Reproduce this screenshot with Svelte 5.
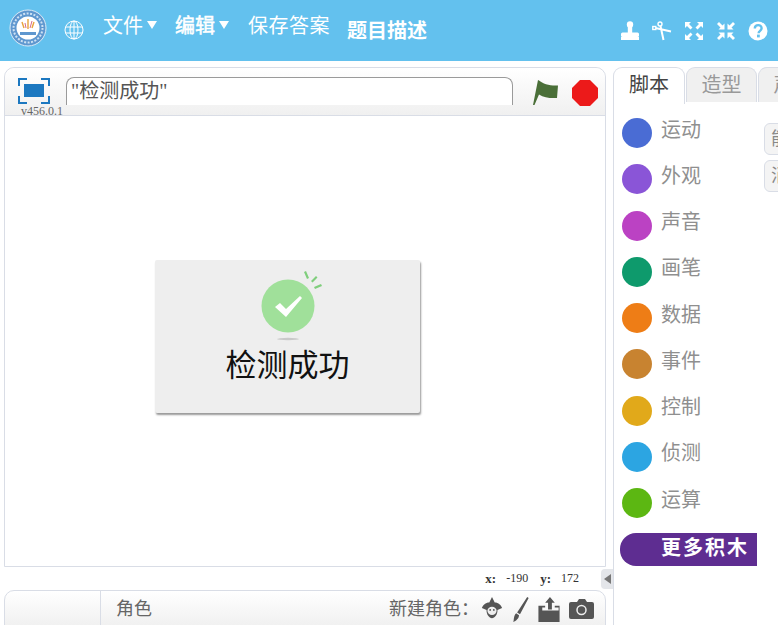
<script>
	const categories = [
		{ name: '运动', color: '#4a6cd4' },
		{ name: '外观', color: '#8a55d7' },
		{ name: '声音', color: '#bb42c3' },
		{ name: '画笔', color: '#0e9a6c' },
		{ name: '数据', color: '#ee7d16' },
		{ name: '事件', color: '#c88330' },
		{ name: '控制', color: '#e1a91a' },
		{ name: '侦测', color: '#2ca5e2' },
		{ name: '运算', color: '#5cb712' }
	];
</script>

<div class="page">
	<header class="topbar">
		<svg class="logo" viewBox="0 0 38 38" width="38" height="38">
			<circle cx="19" cy="19" r="18" fill="#5f97cf" stroke="#dcebf7" stroke-width="1" />
			<circle cx="19" cy="19" r="14.5" fill="none" stroke="#cfe2f3" stroke-width="2" stroke-dasharray="2 1.5" />
			<circle cx="19" cy="19" r="11.5" fill="#fff" />
			<path d="M19 20V10M15 19l-2-6M23 19l2-6" stroke="#e8a33c" stroke-width="1.4" fill="none" />
			<path d="M17 19l-1-5M21 19l2-7" stroke="#d56a8c" stroke-width="1" fill="none" />
			<rect x="11" y="23" width="16" height="3" fill="#5f97cf" />
		</svg>
		<svg class="globe" viewBox="0 0 20 20" width="20" height="20" fill="none" stroke="#fff" stroke-width="1">
			<circle cx="10" cy="10" r="9" />
			<ellipse cx="10" cy="10" rx="4" ry="9" />
			<path d="M10 1v18M1.5 7h17M1.5 13h17" />
		</svg>
		<nav class="menu">
			<span class="item">文件<i class="caret"></i></span>
			<span class="item strong">编辑<i class="caret"></i></span>
			<span class="item save">保存答案</span>
			<span class="item desc">题目描述</span>
		</nav>
		<div class="tools">
			<svg viewBox="0 0 20 20" width="20" height="20" fill="#fff">
				<circle cx="10" cy="3.500" r="3.200" />
				<rect x="7.800" y="5" width="4.400" height="8" />
				<rect x="1" y="11.500" width="18" height="4.500" rx="1.500" />
				<rect x="1" y="16" width="18" height="3" />
			</svg>
			<svg viewBox="0 0 20 20" width="20" height="20" fill="none" stroke="#fff" stroke-width="2">
				<circle cx="8" cy="3" r="2" stroke-width="1.400" />
				<rect x="0.800" y="5.500" width="3" height="3" stroke-width="1.400" />
				<path d="M3.500 7l15.500 3.500M8.500 5l3 14" />
			</svg>
			<svg viewBox="0 0 20 20" width="20" height="20" fill="#fff">
				<path d="M1 1h6L5 3l3.500 3.500-2 2L3 5 1 7zM19 1v6l-2-2-3.500 3.500-2-2L15 3l-2-2zM1 19v-6l2 2 3.500-3.500 2 2L5 17l2 2zM19 19h-6l2-2-3.500-3.500 2-2L17 15l2-2z" />
			</svg>
			<svg viewBox="0 0 20 20" width="20" height="20" fill="#fff">
				<path d="M8.500 8.500h-6l2-2L1 3l2-2 3.500 3.500 2-2zM11.500 8.500v-6l2 2L17 1l2 2-3.500 3.500 2 2zM8.500 11.500v6l-2-2L3 19l-2-2 3.500-3.500-2-2zM11.500 11.500h6l-2 2L19 17l-2 2-3.500-3.500-2 2z" />
			</svg>
			<svg viewBox="0 0 20 20" width="20" height="20">
				<circle cx="10" cy="10" r="9.500" fill="#fff" />
				<path d="M6.800 7.500c0-4.400 6.800-4.400 6.800-.2 0 2.700-3 2.500-3 5" fill="none" stroke="#63c1ee" stroke-width="2.400" />
				<rect x="9" y="13.600" width="2.800" height="2.800" fill="#63c1ee" />
			</svg>
		</div>
	</header>

	<main class="workspace">
		<section class="left">
			<div class="stage">
				<div class="stage-head">
					<svg class="fit" viewBox="0 0 32 26" width="32" height="26" fill="none" stroke="#1c78c0" stroke-width="2">
						<path d="M1 8V1h8M23 1h8v7M1 18v7h8M31 18v7h-8" />
						<rect x="6" y="6" width="20" height="13" fill="#1c78c0" stroke="none" />
					</svg>
					<div class="answer">"检测成功"</div>
					<svg class="flag" viewBox="0 0 28 28" width="28" height="28">
						<path d="M2 27L7 2l1 .5C12 6 19 8 27 7.500L26 20c-7 .5-13-.5-18-3.500L3.500 27z" fill="#4a6f38" />
					</svg>
					<svg class="stop" viewBox="0 0 26 26" width="26" height="26">
						<path d="M8 0h10l8 8v10l-8 8H8l-8-8V8z" fill="#ec1a1a" />
					</svg>
					<span class="version">v456.0.1</span>
				</div>
				<div class="stage-body">
					<div class="dialog">
						<svg class="badge" viewBox="0 0 62 70" width="62" height="70">
							<ellipse cx="28" cy="68" rx="11" ry="1.200" fill="#c9c9c9" />
							<circle cx="28" cy="35" r="26.500" fill="#a0e09a" />
							<path d="M15 36l5-4 6 6 14-13 2 2-16 19z" fill="#fff" />
							<g fill="#7fce7c">
								<path d="M44 1l2-1 3 7-2 1zM51 10l5-5 1.500 1.500-5 5zM54 16l7-3 1 2-7 3z" />
							</g>
						</svg>
						<div class="message">检测成功</div>
					</div>
				</div>
			</div>

			<div class="coords">
				<b>x:</b><span class="num">-190</span><b>y:</b><span class="num">172</span>
			</div>

			<div class="sprites">
				<div class="sprite-thumb"></div>
				<div class="sprite-head">
					<span class="sprite-title">角色</span>
					<span class="new-label">新建角色：</span>
					<div class="new-icons">
						<svg viewBox="0 0 24 26" width="22" height="24" fill="#555">
							<path d="M12 0l3 6c4 0 7 3 8 6l-5 2c0 5-3 9-6 9s-6-4-6-9l-5-2c1-3 4-6 8-6z" />
							<ellipse cx="12" cy="15" rx="5" ry="4.500" fill="#eee" />
							<circle cx="10" cy="14" r="1" /><circle cx="14" cy="14" r="1" />
						</svg>
						<svg viewBox="0 0 18 26" width="18" height="25" fill="#555">
							<path d="M16.500 0l1.500 1-9 17-3-2zM5 17l3 2c0 3-3 6-6 7 1-2 0-6 3-9z" />
						</svg>
						<svg viewBox="0 0 24 26" width="24" height="25" fill="#555">
							<path d="M13 0l5 6h-3v7h-4V6H8z" />
							<path d="M1 9h7v2H5v3h17v-3h-4V9h5v17H1z" />
						</svg>
						<svg viewBox="0 0 25 20" width="25" height="20" fill="#555">
							<path d="M2 3h6l2-3h6l2 3h5a2 2 0 0 1 2 2v13a2 2 0 0 1-2 2H2a2 2 0 0 1-2-2V5a2 2 0 0 1 2-2z" />
							<circle cx="12.500" cy="11" r="4.500" fill="none" stroke="#eee" stroke-width="1.500" />
						</svg>
					</div>
				</div>
			</div>
			<div class="collapse"><i></i></div>
		</section>

		<section class="right">
			<div class="tabs">
				<span class="tab active">脚本</span>
				<span class="tab">造型</span>
				<span class="tab">声音</span>
			</div>
			<div class="palette">
				<ul class="cats">
					{#each categories as cat}
						<li class="cat">
							<i class="dot" style="background:{cat.color}"></i>
							<span>{cat.name}</span>
						</li>
					{/each}
					<li class="more">更多积木</li>
				</ul>
				<div class="side-btns">
					<span class="side-btn">能</span>
					<span class="side-btn">消</span>
				</div>
			</div>
		</section>
	</main>
</div>

<style>
	:global(body) {
		margin: 0;
		background: #fff;
	}

	.page {
		width: 778px;
		height: 625px;
		overflow: hidden;
		font-family: 'Liberation Serif', 'Noto Sans CJK SC', serif;
	}

	.topbar {
		height: 61px;
		background: #63c1ee;
		display: flex;
		align-items: flex-start;
		color: #fff;
	}
	.logo {
		margin: 9px 0 0 9px;
	}
	.globe {
		margin: 20px 0 0 17px;
	}
	.menu {
		display: flex;
		margin-left: 19px;
		padding-top: 13px;
		font-size: 20px;
		line-height: 26px;
	}
	.item {
		display: flex;
		align-items: flex-start;
	}
	.item.strong {
		margin-left: 18px;
		-webkit-text-stroke: 0.5px #fff;
	}
	.item.save {
		margin-left: 19px;
		letter-spacing: 0.5px;
	}
	.item.desc {
		margin-left: 17px;
		margin-top: 5px;
		font-weight: 700;
	}
	.caret {
		width: 0;
		height: 0;
		margin: 8px 0 0 4px;
		border-left: 5.500px solid transparent;
		border-right: 5.500px solid transparent;
		border-top: 8px solid #fff;
	}
	.tools {
		display: flex;
		gap: 12px;
		margin-left: auto;
		padding: 21px 10px 0 0;
	}

	.workspace {
		display: flex;
		height: 564px;
		padding-top: 6px;
	}
	.left {
		position: relative;
		width: 613px;
		flex: none;
	}

	.stage {
		margin-left: 4px;
		width: 600px;
		height: 498px;
		border: 1px solid #d9dde6;
		border-radius: 10px 10px 0 0;
		display: flex;
		flex-direction: column;
	}
	.stage-head {
		position: relative;
		height: 47px;
		flex: none;
		display: flex;
		align-items: flex-start;
		border-bottom: 1px solid #d9dde6;
		border-radius: 10px 10px 0 0;
		background: linear-gradient(#fff, #f0f0f0);
	}
	.fit {
		margin: 10px 0 0 13px;
	}
	.answer {
		margin: 9px 0 0 16px;
		width: 447px;
		height: 28px;
		padding-left: 4px;
		box-sizing: border-box;
		background: #fff;
		border: 1px solid #9a9a9a;
		border-bottom: none;
		border-radius: 8px 8px 0 0;
		font-size: 20px;
		line-height: 27px;
		color: #555;
	}
	.flag {
		margin: 10px 0 0 18px;
	}
	.stop {
		margin: 12px 0 0 13px;
	}
	.version {
		position: absolute;
		left: 16px;
		bottom: -2px;
		font-size: 12px;
		line-height: 12px;
		color: #666;
	}
	.stage-body {
		position: relative;
		flex: 1;
		background: #fff;
	}
	.dialog {
		position: absolute;
		left: 150px;
		top: 144px;
		width: 265px;
		height: 153px;
		background: #eee;
		border-radius: 2px;
		box-shadow: 1px 2px 2px #999;
		display: flex;
		flex-direction: column;
		align-items: center;
	}
	.badge {
		margin: 11px 0 0 7px;
	}
	.message {
		margin-top: 4px;
		font-size: 31px;
		line-height: 36px;
		color: #111;
		font-family: 'Noto Sans CJK SC', sans-serif;
	}

	.coords {
		height: 23px;
		display: flex;
		align-items: center;
		justify-content: flex-end;
		padding-right: 34px;
		font-size: 12px;
		color: #333;
	}
	.coords b {
		margin-left: 12px;
		font-size: 13px;
	}
	.coords .num {
		margin-left: 10px;
	}

	.sprites {
		margin-left: 4px;
		width: 600px;
		height: 60px;
		border: 1px solid #d9dde6;
		border-radius: 10px 10px 0 0;
		background: linear-gradient(#fff, #f0f0f0 36px);
		display: flex;
	}
	.sprite-thumb {
		width: 95px;
		flex: none;
		border-right: 1px solid #d9dde6;
	}
	.sprite-head {
		flex: 1;
		display: flex;
		align-items: flex-start;
		padding: 5px 11px 0 15px;
		color: #666;
		font-size: 18px;
		line-height: 26px;
	}
	.sprite-title {
		flex: 1;
	}
	.new-label {
		margin-right: 2px;
	}
	.new-icons {
		display: flex;
		align-items: center;
		gap: 8px;
		height: 26px;
	}

	.collapse {
		position: absolute;
		left: 601px;
		top: 502px;
		width: 12px;
		height: 20px;
		border-radius: 4px 0 0 4px;
		background: #e4e6ea;
		display: flex;
		align-items: center;
		justify-content: center;
	}
	.collapse i {
		width: 0;
		height: 0;
		border-top: 5px solid transparent;
		border-bottom: 5px solid transparent;
		border-right: 7px solid #777;
	}

	.right {
		flex: 1;
		min-width: 0;
		overflow: hidden;
	}
	.tabs {
		display: flex;
		gap: 1px;
		height: 36px;
		width: 240px;
	}
	.tab {
		width: 71px;
		height: 35px;
		flex: none;
		box-sizing: border-box;
		text-align: center;
		font-size: 20px;
		line-height: 35px;
		color: #999;
		background: #f0f0f0;
		border: 1px solid #d9dde6;
		border-bottom: none;
		border-radius: 9px 9px 0 0;
	}
	.tab.active {
		width: 72px;
		height: 37px;
		background: #fff;
		color: #444;
		position: relative;
	}
	.palette {
		position: relative;
		height: 528px;
		border-left: 1px solid #d9dde6;
		border-top: 1px solid transparent;
		display: flex;
	}
	.cats {
		list-style: none;
		margin: 0;
		padding: 14px 0 0 8px;
		width: 142px;
		flex: none;
	}
	.cat {
		display: flex;
		align-items: center;
		height: 30px;
		margin-bottom: 16.250px;
		font-size: 20px;
		color: #8f8f8f;
	}
	.cat span {
		margin-bottom: 10px;
	}
	.dot {
		width: 30px;
		height: 30px;
		border-radius: 50%;
		margin-right: 9px;
	}
	.more {
		margin: -1px 0 0 -2px;
		width: 137px;
		height: 33px;
		box-sizing: border-box;
		padding-left: 41px;
		background: #5e2d91;
		border-radius: 16px 0 0 16px;
		color: #fff;
		font-size: 20px;
		font-weight: 700;
		line-height: 30px;
		letter-spacing: 2px;
	}
	.side-btns {
		display: flex;
		flex-direction: column;
		gap: 5px;
		padding-top: 19px;
		overflow: hidden;
	}
	.side-btn {
		width: 60px;
		height: 32px;
		box-sizing: border-box;
		padding-left: 6px;
		border: 1px solid #d9dde6;
		border-radius: 6px;
		background: #f4f4f4;
		color: #888;
		font-size: 18px;
		line-height: 30px;
	}
</style>
